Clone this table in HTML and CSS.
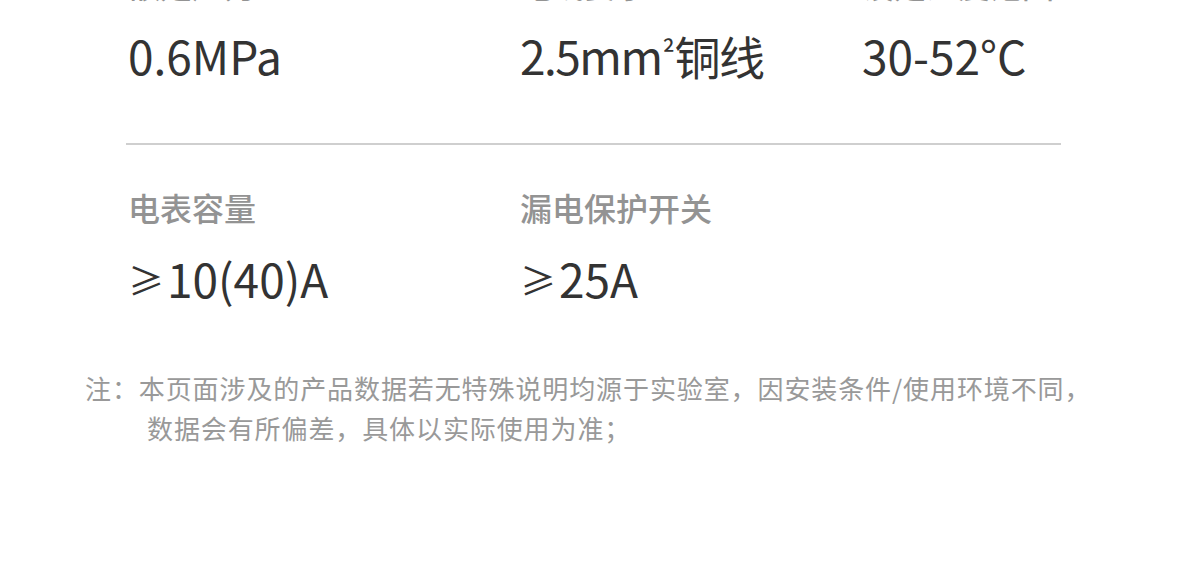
FILE: index.html
```html
<!DOCTYPE html>
<html lang="zh-CN">
<head>
    <meta charset="UTF-8">
    <meta name="viewport" content="width=device-width, initial-scale=1.0">
    <title>产品参数</title>
    <link rel="stylesheet" href="styles.css">
</head>
<body>
    <div class="specs">
        <div class="spec-row with-line">
            <div class="spec">
                <div class="spec-label">额定压力</div>
                <div class="spec-value">0.6MPa</div>
            </div>
            <div class="spec">
                <div class="spec-label">电线要求</div>
                <div class="spec-value narrow">2.5mm<span class="sup">²</span>铜线</div>
            </div>
            <div class="spec">
                <div class="spec-label">设定温度范围</div>
                <div class="spec-value">30-52°C</div>
            </div>
        </div>
        <div class="spec-row">
            <div class="spec">
                <div class="spec-label">电表容量</div>
                <div class="spec-value"><span class="ge">≥</span>10(40)A</div>
            </div>
            <div class="spec">
                <div class="spec-label">漏电保护开关</div>
                <div class="spec-value"><span class="ge">≥</span>25A</div>
            </div>
        </div>
    </div>
    <p class="note">注：本页面涉及的产品数据若无特殊说明均源于实验室，因安装条件/使用环境不同，数据会有所偏差，具体以实际使用为准；</p>
</body>
</html>
```

FILE: styles.css
```css
body {
    font-family: 'Noto Sans CJK SC', 'Noto Sans', sans-serif;
    margin: 0;
    padding: 0;
    background-color: #fff;
}
.specs {
    width: 935px;
    margin: -36px 0 0 126px;
}
.spec-row {
    display: grid;
    grid-template-columns: 392px 342px 1fr;
}
.with-line {
    border-bottom: 2px solid #cfcfcf;
    padding-bottom: 60px;
    margin-bottom: 42px;
}
.spec {
    padding-left: 2px;
}
.spec-label {
    font-size: 32px;
    font-weight: 500;
    line-height: 40px;
    color: #939393;
    margin-bottom: 23px;
}
.spec-value {
    font-size: 46px;
    line-height: 56px;
    color: #333;
}
.narrow {
    letter-spacing: -1.5px;
}
.sup {
    font-size: 30px;
    vertical-align: 10px;
    line-height: 0;
    margin: 0 1px;
}
.ge {
    font-size: 36px;
    vertical-align: 3px;
    margin-right: 3px;
}
.note {
    margin: 61px 0 0 85px;
    width: 955px;
    padding-left: 62px;
    text-indent: -62px;
    font-size: 26px;
    line-height: 40px;
    letter-spacing: 0.9px;
    color: #999;
}
```
